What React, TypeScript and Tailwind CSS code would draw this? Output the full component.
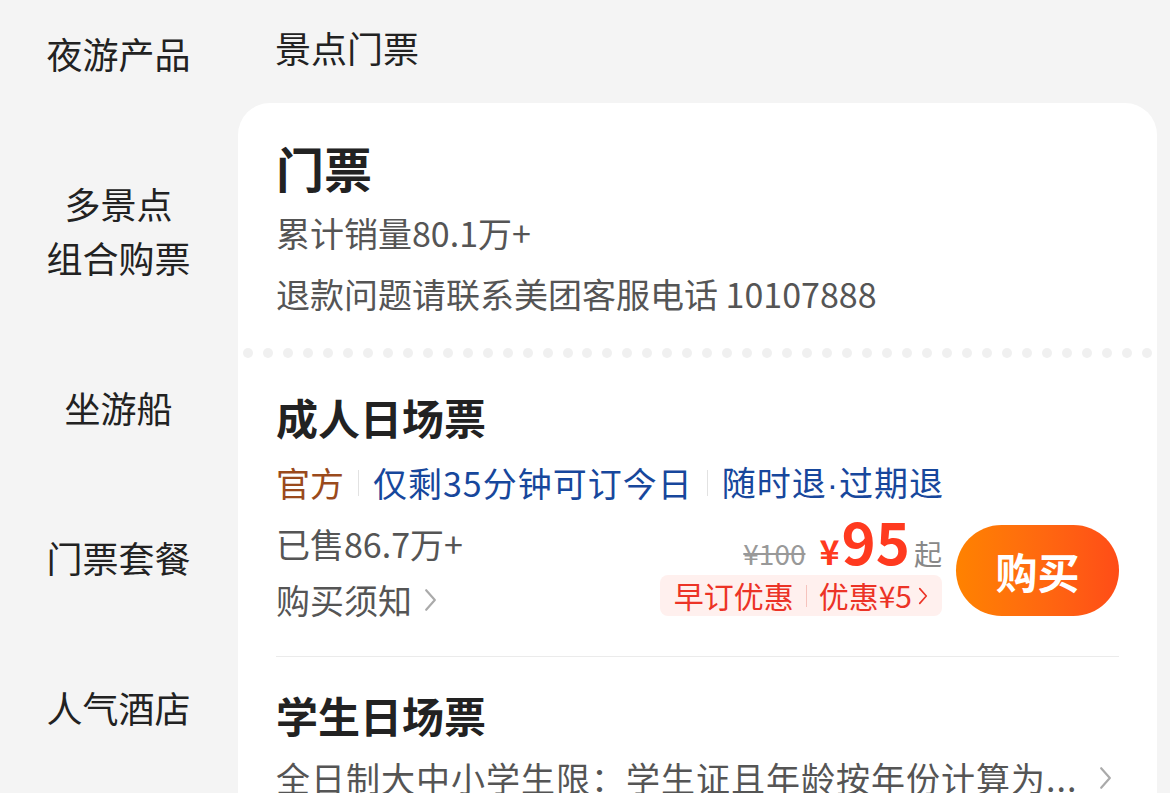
import React from 'react';

const sideItems: string[][] = [
  ['夜游产品'],
  ['多景点', '组合购票'],
  ['坐游船'],
  ['门票套餐'],
  ['人气酒店'],
];

const Chevron: React.FC<{ className?: string }> = ({ className }) => (
  <svg
    viewBox="0 0 12 22"
    className={className}
    fill="none"
    stroke="currentColor"
    strokeWidth={2}
    strokeLinecap="round"
    strokeLinejoin="round"
  >
    <polyline points="2,2 10,11 2,20" />
  </svg>
);

const Sep: React.FC = () => <span className="mx-[14px] h-[26px] w-px bg-[#e2e2e2]" />;

const App: React.FC = () => {
  const dots = Array.from({ length: 46 }, (_, i) => i);

  return (
    <div className="flex h-[793px] w-full overflow-hidden bg-[#f4f4f4] font-['Noto_Sans_CJK_SC',sans-serif] text-[#222]">
      <nav className="-mt-[22px] w-[237px] shrink-0">
        {sideItems.map((lines) => (
          <div key={lines[0]} className="py-[48px] text-center text-[36px] leading-[54px]">
            {lines.map((line) => (
              <div key={line}>{line}</div>
            ))}
          </div>
        ))}
      </nav>

      <main className="flex-1 pl-px pr-[13px]">
        <h1 className="pl-[37px] pt-[22px] text-[36px] font-normal leading-[50px]">景点门票</h1>

        <section className="mt-[31px] rounded-t-[32px] bg-white pb-10">
          <div className="px-[38px] pt-[34px]">
            <h2 className="text-[48px] font-bold leading-[60px]">门票</h2>
            <p className="mt-[10px] text-[34px] leading-[52px] text-[#555]">累计销量80.1万+</p>
            <p className="mt-[9px] text-[34px] leading-[52px] text-[#555]">
              退款问题请联系美团客服电话 10107888
            </p>
          </div>

          <div className="mt-[28px] flex justify-between px-[5px]">
            {dots.map((d) => (
              <span key={d} className="h-[10px] w-[10px] rounded-full bg-[#f0f0f0]" />
            ))}
          </div>

          <div className="px-[38px]">
            <h3 className="mt-[31px] text-[42px] font-bold leading-[56px]">成人日场票</h3>

            <div className="mt-[12px] flex items-center text-[34px] leading-[50px]">
              <span className="text-[#9a4a1c]">官方</span>
              <Sep />
              <span className="tracking-[1px] text-[#17479c]">仅剩35分钟可订今日</span>
              <Sep />
              <span className="tracking-[1px] text-[#17479c]">
                随时退<span className="font-['Liberation_Sans',sans-serif]">·</span>过期退
              </span>
            </div>

            <div className="mt-[10px] flex items-start">
              <div className="flex-1 text-[34px] leading-[50px] text-[#555]">
                <p>已售86.7万+</p>
                <p className="mt-[6px] flex items-center">
                  购买须知
                  <Chevron className="ml-[12px] h-[24px] w-[13px] text-[#aaa]" />
                </p>
              </div>

              <div className="-mt-[8px] flex items-end gap-[14px]">
                <div className="flex flex-col items-end">
                  <div className="flex h-[56px] items-baseline leading-none">
                    <span className="mr-[14px] text-[28px] text-[#999] line-through">¥100</span>
                    <span className="text-[34px] font-bold text-[#ff3a1f]">¥</span>
                    <span className="ml-[2px] text-[58px] font-bold text-[#ff3a1f]">95</span>
                    <span className="ml-[4px] text-[28px] text-[#888]">起</span>
                  </div>
                  <div className="mt-[8px] flex h-[41px] items-center rounded-[8px] bg-[#fff0ee] px-[14px] text-[30px] text-[#ec3326]">
                    早订优惠
                    <span className="mx-[12px] h-[22px] w-px bg-[#f6c3bd]" />
                    优惠¥5
                    <Chevron className="ml-[6px] h-[18px] w-[10px]" />
                  </div>
                </div>
                <button className="h-[91px] w-[163px] rounded-full bg-linear-to-r from-[#ff8200] to-[#ff4c17] text-[42px] font-bold text-white">
                  购买
                </button>
              </div>
            </div>

            <div className="mt-[31px] h-px bg-[#ebebeb]" />

            <h3 className="mt-[30px] text-[42px] font-bold leading-[56px]">学生日场票</h3>
            <div className="mt-[10px] flex items-center text-[34px] leading-[50px] text-[#555]">
              <span className="tracking-[1px]">全日制大中小学生限：学生证且年龄按年份计算为...</span>
              <Chevron className="ml-[22px] h-[24px] w-[13px] text-[#aaa]" />
            </div>
          </div>
        </section>
      </main>
    </div>
  );
};

export default App;
